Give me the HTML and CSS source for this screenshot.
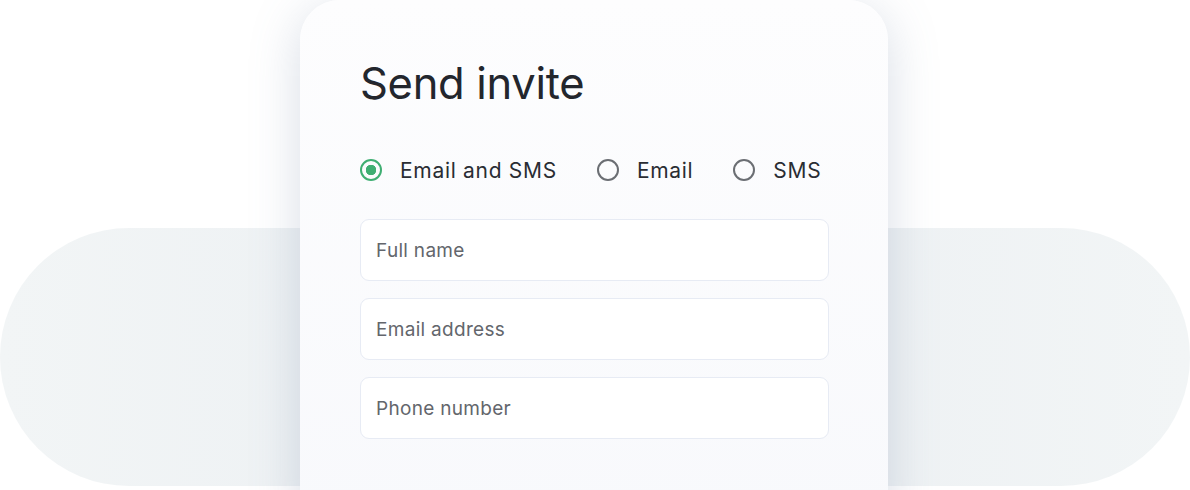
FILE: index.html
```html
<!DOCTYPE html>
<html lang="en">
  <head>
    <meta charset="UTF-8" />
    <meta name="viewport" content="width=device-width, initial-scale=1.0" />
    <title>Send invite</title>
    <link rel="stylesheet" href="styles.css">
  </head>
  <body>
    <div class="stage">
      <div class="pill"></div>

      <!-- invite card -->
      <form class="card">
        <h1 class="title">Send invite</h1>
        <div class="choices">
          <label class="choice">
            <input type="radio" name="channel" value="both" checked />
            <span class="dot"></span>
            Email and SMS
          </label>
          <label class="choice">
            <input type="radio" name="channel" value="email" />
            <span class="dot"></span>
            Email
          </label>
          <label class="choice">
            <input type="radio" name="channel" value="sms" />
            <span class="dot"></span>
            SMS
          </label>
        </div>
        <div class="fields">
          <input class="field" type="text" placeholder="Full name" />
          <input class="field" type="email" placeholder="Email address" />
          <input class="field" type="tel" placeholder="Phone number" />
        </div>
      </form>
    </div>
  </body>
</html>
```

FILE: styles.css
```css
html,
body {
  margin: 0;
  background: #fff;
}
body {
  font-family: Inter, "Noto Sans", sans-serif;
  color: #23262d;
  overflow: hidden;
}
.stage {
  display: grid;
  height: 490px;
  overflow: hidden;
}
.pill {
  grid-area: 1 / 1;
  align-self: start;
  margin-top: 228px;
  height: 258px;
  border-radius: 129px;
  background: linear-gradient(to right, #f2f5f6, #ebeff2 50%, #f2f5f6);
}
.card {
  grid-area: 1 / 1;
  justify-self: start;
  align-self: start;
  box-sizing: border-box;
  width: 588px;
  height: 520px;
  margin: 0 0 0 300px;
  padding: 55px 59px 0 60px;
  border-radius: 40px 40px 0 0;
  background: linear-gradient(#fdfdfe, #f8f9fc);
  box-shadow: 0 10px 50px rgba(105, 122, 160, 0.26);
}
.title {
  margin: 0;
  font-size: 43.5px;
  font-weight: 400;
  line-height: 56px;
  letter-spacing: -0.3px;
}
.choices {
  display: flex;
  gap: 40px;
  margin-top: 45px;
  height: 28px;
  align-items: center;
}
.choice {
  display: flex;
  align-items: center;
  gap: 18px;
  font-size: 21px;
  letter-spacing: 0.7px;
  color: #2a2d33;
}
.choice input {
  display: none;
}
.dot {
  box-sizing: border-box;
  width: 22px;
  height: 22px;
  border: 2px solid #6b6e73;
  border-radius: 50%;
}
.choice input:checked + .dot {
  border-color: #3fae72;
  background: radial-gradient(circle, #3fae72 0 5px, transparent 5.5px);
}
.fields {
  display: flex;
  flex-direction: column;
  gap: 17px;
  margin-top: 35px;
}
.field {
  box-sizing: border-box;
  height: 62px;
  padding: 0 15px;
  border: 1px solid #e7ebf4;
  border-radius: 9px;
  background: #fff;
  font-family: inherit;
  font-size: 19px;
  letter-spacing: 0.3px;
  outline: none;
}
.field::placeholder {
  color: #63666c;
}
```
